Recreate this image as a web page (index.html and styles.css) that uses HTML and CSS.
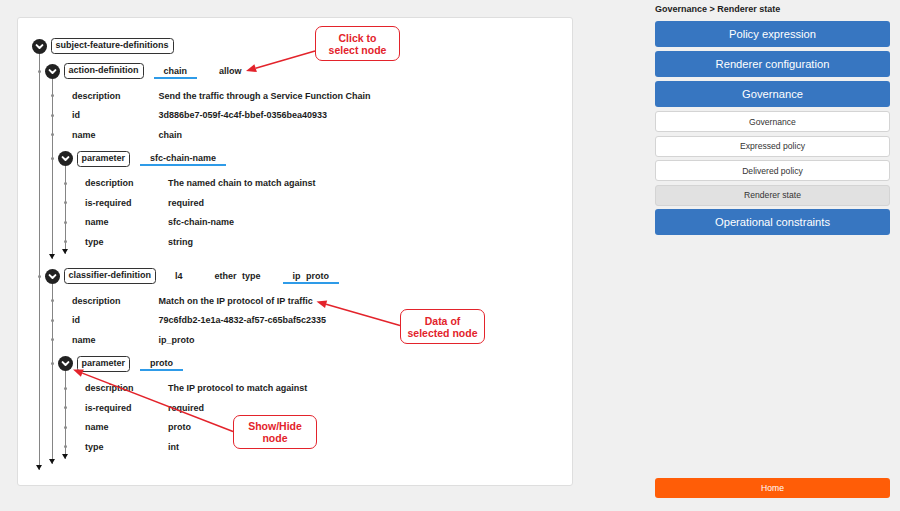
FILE: index.html
```html
<!DOCTYPE html>
<html>
<head>
<meta charset="utf-8">
<link rel="stylesheet" href="styles.css">
</head>
<body>
<div class="page">
  <main class="card">
    <div class="node root">
      <div class="head">
        <svg class="tog" viewBox="0 0 15 15"><circle cx="7.5" cy="7.5" r="7.5" fill="#222"/><path d="M4.6 6.1 L7.5 9 L10.4 6.1" stroke="#fff" stroke-width="2" fill="none" stroke-linecap="round" stroke-linejoin="round"/></svg>
        <span class="lbl">subject-feature-definitions</span>
      </div>
      <div class="children">
        <div class="node">
          <div class="head">
            <svg class="tog" viewBox="0 0 15 15"><circle cx="7.5" cy="7.5" r="7.5" fill="#222"/><path d="M4.6 6.1 L7.5 9 L10.4 6.1" stroke="#fff" stroke-width="2" fill="none" stroke-linecap="round" stroke-linejoin="round"/></svg>
            <span class="lbl">action-definition</span>
            <span class="sel">chain</span>
            <span class="val">allow</span>
          </div>
          <div class="children">
            <div class="prop"><span class="k">description</span><span class="v">Send the traffic through a Service Function Chain</span></div>
            <div class="prop"><span class="k">id</span><span class="v">3d886be7-059f-4c4f-bbef-0356bea40933</span></div>
            <div class="prop"><span class="k">name</span><span class="v">chain</span></div>
            <div class="node lv2">
              <div class="head">
                <svg class="tog" viewBox="0 0 15 15"><circle cx="7.5" cy="7.5" r="7.5" fill="#222"/><path d="M4.6 6.1 L7.5 9 L10.4 6.1" stroke="#fff" stroke-width="2" fill="none" stroke-linecap="round" stroke-linejoin="round"/></svg>
                <span class="lbl">parameter</span>
                <span class="sel">sfc-chain-name</span>
              </div>
              <div class="children">
                <div class="prop"><span class="k">description</span><span class="v">The named chain to match against</span></div>
                <div class="prop"><span class="k">is-required</span><span class="v">required</span></div>
                <div class="prop"><span class="k">name</span><span class="v">sfc-chain-name</span></div>
                <div class="prop"><span class="k">type</span><span class="v">string</span></div>
              </div>
            </div>
          </div>
        </div>
        <div class="node">
          <div class="head">
            <svg class="tog" viewBox="0 0 15 15"><circle cx="7.5" cy="7.5" r="7.5" fill="#222"/><path d="M4.6 6.1 L7.5 9 L10.4 6.1" stroke="#fff" stroke-width="2" fill="none" stroke-linecap="round" stroke-linejoin="round"/></svg>
            <span class="lbl">classifier-definition</span>
            <span class="val l4">l4</span>
            <span class="val ether">ether type</span>
            <span class="sel far">ip proto</span>
          </div>
          <div class="children">
            <div class="prop"><span class="k">description</span><span class="v">Match on the IP protocol of IP traffic</span></div>
            <div class="prop"><span class="k">id</span><span class="v">79c6fdb2-1e1a-4832-af57-c65baf5c2335</span></div>
            <div class="prop"><span class="k">name</span><span class="v">ip_proto</span></div>
            <div class="node lv2">
              <div class="head">
                <svg class="tog" viewBox="0 0 15 15"><circle cx="7.5" cy="7.5" r="7.5" fill="#222"/><path d="M4.6 6.1 L7.5 9 L10.4 6.1" stroke="#fff" stroke-width="2" fill="none" stroke-linecap="round" stroke-linejoin="round"/></svg>
                <span class="lbl">parameter</span>
                <span class="sel">proto</span>
              </div>
              <div class="children">
                <div class="prop"><span class="k">description</span><span class="v">The IP protocol to match against</span></div>
                <div class="prop"><span class="k">is-required</span><span class="v">required</span></div>
                <div class="prop"><span class="k">name</span><span class="v">proto</span></div>
                <div class="prop"><span class="k">type</span><span class="v">int</span></div>
              </div>
            </div>
          </div>
        </div>
      </div>
    </div>
  </main>

  <aside class="side">
    <div class="crumb">Governance &gt; Renderer state</div>
    <div class="btn">Policy expression</div>
    <div class="btn">Renderer configuration</div>
    <div class="btn">Governance</div>
    <div class="sub">Governance</div>
    <div class="sub">Expressed policy</div>
    <div class="sub">Delivered policy</div>
    <div class="sub on">Renderer state</div>
    <div class="btn">Operational constraints</div>
    <div class="home">Home</div>
  </aside>

  <svg class="overlay" viewBox="0 0 900 511" width="900" height="511">
    <g stroke="#e3232b" stroke-width="1.5" fill="none">
      <line x1="315" y1="51" x2="255.6" y2="68.2"/>
      <line x1="400" y1="325.5" x2="326.1" y2="304.2"/>
      <line x1="233" y1="431.5" x2="82.3" y2="373.1"/>
    </g>
    <g fill="#e3232b">
      <polygon points="246,71 256.9,72.1 254.4,64.3"/>
      <polygon points="316.5,301.5 325,308.1 327.2,300.4"/>
      <polygon points="73,369.5 80.9,376.8 83.8,369.4"/>
    </g>
  </svg>
  <div class="callout c1">Click to<br>select node</div>
  <div class="callout c2">Data of<br>selected node</div>
  <div class="callout c3">Show/Hide<br>node</div>
</div>
</body>
</html>
```

FILE: styles.css
```css
html, body {
  margin: 0;
  padding: 0;
}

body {
  background: #f0f0f0;
  font-family: "Liberation Sans", Arial, sans-serif;
}

.page {
  position: relative;
  width: 900px;
  height: 511px;
  box-sizing: border-box;
  padding: 0 10px 0 17px;
  display: flex;
  justify-content: space-between;
}

/* left tree card */
.card {
  margin-top: 17px;
  width: 556px;
  height: 469px;
  box-sizing: border-box;
  background: #fff;
  border: 1px solid #dedede;
  border-radius: 3px;
  padding: 18px 0 0 13.5px;
}

.node {
  position: relative;
  margin-top: 4px;
  margin-bottom: 3.5px;
}

.node:first-child {
  margin-top: 0;
}

.node + .node {
  margin-top: 7px;
}

.root {
  margin: 0;
}

.head {
  display: flex;
  align-items: center;
  height: 20px;
  font-size: 9px;
  font-weight: bold;
  color: #1c1c1c;
  white-space: nowrap;
}

.tog {
  display: block;
  flex: none;
  width: 15px;
  height: 15px;
}

.lbl {
  margin-left: 4px;
  height: 16px;
  box-sizing: border-box;
  border: 1.5px solid #333;
  border-radius: 3.5px;
  padding: 0 4px;
  line-height: 13px;
  font-size: 9px;
}

.sel {
  margin-left: 10px;
  padding: 2px 10px 0;
  line-height: 11px;
  border-bottom: 2px solid #2e9be8;
}

.sel.far {
  margin-left: 22px;
  word-spacing: 3px;
}

.val {
  margin-left: 22px;
}

.val.l4 {
  margin-left: 19px;
}

.val.ether {
  margin-left: 32px;
  word-spacing: 3px;
}

.children {
  position: relative;
  margin-left: 7px;
  margin-top: -2.5px;
  border-left: 1px solid #858585;
  padding: 7.5px 0 2px 5px;
}

.children::after {
  content: "";
  position: absolute;
  left: -4px;
  bottom: 0;
  width: 0;
  height: 0;
  border-left: 3.5px solid transparent;
  border-right: 3.5px solid transparent;
  border-top: 5px solid #111;
}

.children > .prop::before,
.children > .node::before {
  content: "";
  position: absolute;
  left: -7px;
  width: 3px;
  height: 3px;
  border-radius: 50%;
  background: #8a8a8a;
}

.children > .prop::before {
  top: calc(50% - 1.5px);
}

.children > .node::before {
  top: 8.5px;
}

.prop {
  position: relative;
  display: flex;
  align-items: center;
  height: 19.5px;
  padding-left: 14.5px;
  font-size: 9px;
  font-weight: bold;
  color: #1c1c1c;
  white-space: nowrap;
}

.k {
  width: 86.5px;
  flex: none;
}

.lv2 .k {
  width: 83px;
}

/* right side */
.side {
  width: 235px;
  height: 511px;
  box-sizing: border-box;
  padding: 3px 0 13px;
  display: flex;
  flex-direction: column;
}

.crumb {
  font-size: 9px;
  font-weight: bold;
  color: #222;
  line-height: 12px;
  margin-bottom: 6px;
  white-space: nowrap;
}

.btn,
.sub,
.home {
  display: flex;
  align-items: center;
  justify-content: center;
  box-sizing: border-box;
  border-radius: 3px;
  white-space: nowrap;
}

.btn {
  height: 26px;
  margin-bottom: 4px;
  background: #3776c1;
  color: #fff;
  font-size: 11.2px;
}

.sub {
  height: 21px;
  margin-bottom: 3.5px;
  background: #fff;
  border: 1px solid #d4d4d4;
  color: #333;
  font-size: 8.6px;
}

.sub.on {
  background: #e1e1e1;
}

.home {
  margin-top: auto;
  height: 20px;
  background: #ff5d07;
  color: #fff;
  font-size: 8.6px;
}

/* annotations */
.overlay {
  position: absolute;
  left: 0;
  top: 0;
  pointer-events: none;
}

.callout {
  position: absolute;
  box-sizing: border-box;
  display: flex;
  align-items: center;
  justify-content: center;
  text-align: center;
  background: #fff;
  border: 1.5px solid #e3232b;
  border-radius: 7px;
  color: #e3232b;
  font-weight: bold;
  font-size: 10.5px;
  line-height: 12px;
}

.c1 {
  left: 315px;
  top: 26px;
  width: 85px;
  height: 35px;
}

.c2 {
  left: 400px;
  top: 309px;
  width: 85px;
  height: 35px;
}

.c3 {
  left: 233px;
  top: 415px;
  width: 84px;
  height: 34px;
}
```
